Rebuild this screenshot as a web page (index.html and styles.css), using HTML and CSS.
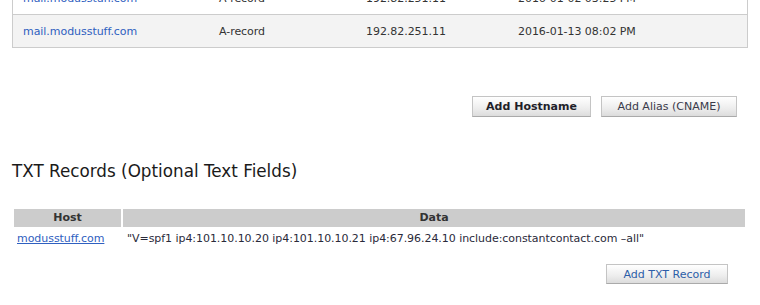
FILE: index.html
```html
<!DOCTYPE html>
<html>
<head>
<meta charset="utf-8">
<link rel="stylesheet" href="styles.css">
</head>
<body>
<div class="page">
  <div class="hosts">
    <div class="hrow">
      <a class="link" href="#">mail.modusstuff.com</a>
      <span>A-record</span>
      <span>192.82.251.11</span>
      <span>2016-01-02 03:25 PM</span>
    </div>
    <div class="hrow alt">
      <a class="link" href="#">mail.modusstuff.com</a>
      <span>A-record</span>
      <span>192.82.251.11</span>
      <span>2016-01-13 08:02 PM</span>
    </div>
  </div>

  <div class="actions">
    <button class="btn btn-bold btn-host">Add Hostname</button>
    <button class="btn btn-alias">Add Alias (CNAME)</button>
  </div>

  <h2 class="title">TXT Records (Optional Text Fields)</h2>

  <div class="txt">
    <div class="th th-host">Host</div>
    <div class="th th-data">Data</div>
    <div class="td td-host"><a class="ulink" href="#">modusstuff.com</a></div>
    <div class="td td-data">"V=spf1 ip4:101.10.10.20 ip4:101.10.10.21 ip4:67.96.24.10 include:constantcontact.com –all"</div>
  </div>

  <div class="actions2">
    <button class="btn btn-txt">Add TXT Record</button>
  </div>
</div>
</body>
</html>
```

FILE: styles.css
```css
html, body {
  margin: 0;
  padding: 0;
  background: #fff;
}
body {
  font-family: "DejaVu Sans", Verdana, sans-serif;
  font-size: 11px;
  letter-spacing: -0.05px;
  color: #333;
}
.page {
  padding: 0 13px 0 12px;
}
.hosts {
  margin-top: -19px;
  border: 1px solid #cccccc;
  width: 734px;
}
.hrow {
  display: grid;
  grid-template-columns: 196px 147px 152px 1fr;
  align-items: center;
  height: 32px;
  padding-left: 10px;
}
.hrow.alt {
  background: #f3f3f3;
  border-top: 1px solid #cccccc;
}
.link {
  color: #2f60c0;
  text-decoration: none;
}
.actions {
  display: flex;
  justify-content: flex-end;
  gap: 10px;
  margin-top: 48px;
  padding-right: 10px;
}
.btn {
  font-family: "DejaVu Sans", Verdana, sans-serif;
  font-size: 11px;
  letter-spacing: 0;
  height: 21px;
  padding: 0;
  border: 1px solid #c4c4c4;
  border-bottom-color: #aaaaaa;
  background: linear-gradient(#ffffff, #ededed 60%, #dcdcdc);
  color: #333;
  border-radius: 0;
}
.btn-bold {
  font-weight: bold;
  color: #1f1f2a;
}
.btn-host { width: 119px; }
.btn-alias { width: 136px; color: #3a3a4a; }
.title {
  margin: 43px 0 0 0;
  font-family: "DejaVu Sans", sans-serif;
  font-weight: normal;
  font-size: 16.8px;
  letter-spacing: 0;
  color: #1a1a1a;
  line-height: 22px;
}
.txt {
  display: grid;
  grid-template-columns: 107px 1fr;
  column-gap: 2px;
  margin: 27px 2px 0 2px;
}
.th {
  background: #cccccc;
  font-weight: bold;
  text-align: center;
  height: 18px;
  line-height: 18px;
  color: #333;
}
.td {
  padding-top: 4px;
  line-height: 15px;
  color: #2a2a3a;
}
.td-host { padding-left: 3px; }
.td-data { padding-left: 4px; }
.ulink {
  color: #2f60c0;
  text-decoration: underline;
}
.actions2 {
  display: flex;
  justify-content: flex-end;
  margin-top: 18px;
  padding-right: 19px;
}
.btn-txt {
  width: 122px;
  height: 20px;
  color: #2d5ea8;
}
```
